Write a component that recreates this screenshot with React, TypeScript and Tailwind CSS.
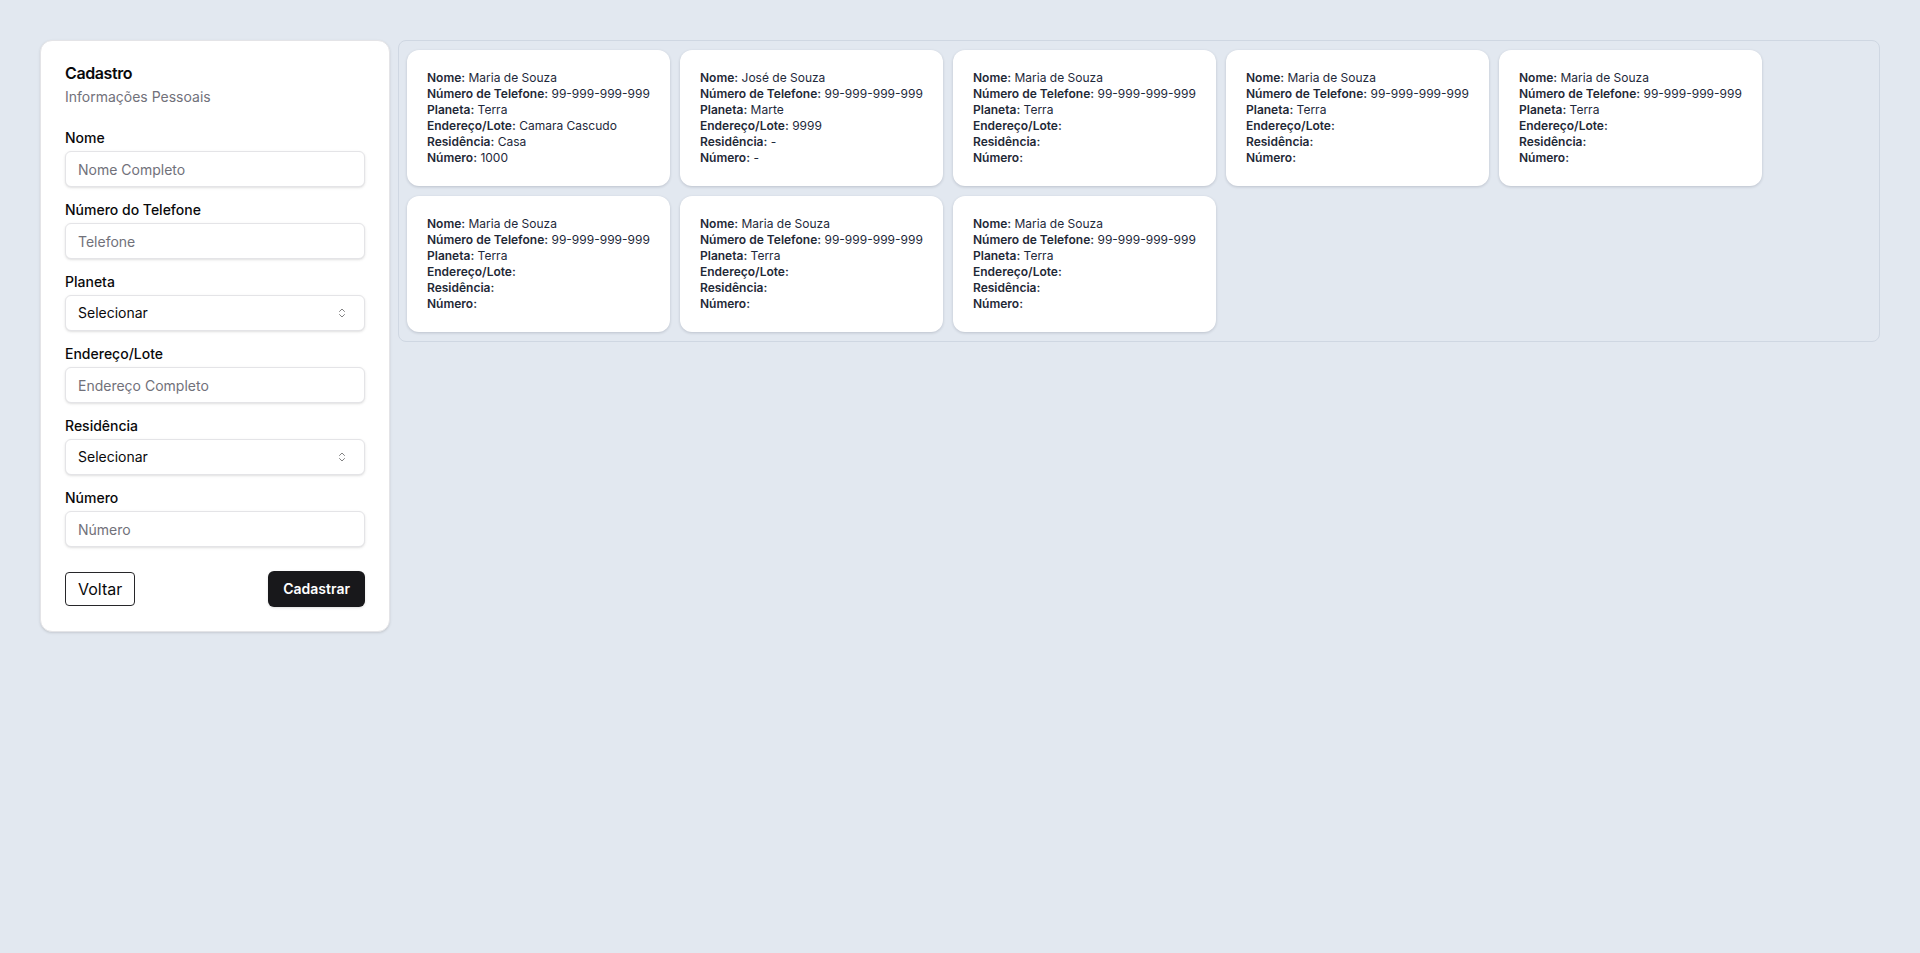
import type { ReactNode } from "react";

type Pessoa = {
  nome: string;
  telefone: string;
  planeta: string;
  endereco: string;
  residencia: string;
  numero: string;
};

const pessoas: Pessoa[] = [
  { nome: "Maria de Souza", telefone: "99-999-999-999", planeta: "Terra", endereco: "Camara Cascudo", residencia: "Casa", numero: "1000" },
  { nome: "José de Souza", telefone: "99-999-999-999", planeta: "Marte", endereco: "9999", residencia: "-", numero: "-" },
  { nome: "Maria de Souza", telefone: "99-999-999-999", planeta: "Terra", endereco: "", residencia: "", numero: "" },
  { nome: "Maria de Souza", telefone: "99-999-999-999", planeta: "Terra", endereco: "", residencia: "", numero: "" },
  { nome: "Maria de Souza", telefone: "99-999-999-999", planeta: "Terra", endereco: "", residencia: "", numero: "" },
  { nome: "Maria de Souza", telefone: "99-999-999-999", planeta: "Terra", endereco: "", residencia: "", numero: "" },
  { nome: "Maria de Souza", telefone: "99-999-999-999", planeta: "Terra", endereco: "", residencia: "", numero: "" },
  { nome: "Maria de Souza", telefone: "99-999-999-999", planeta: "Terra", endereco: "", residencia: "", numero: "" },
];

function Field({ label, children }: { label: string; children: ReactNode }) {
  return (
    <div className="flex flex-col gap-1.5">
      <label className="text-sm leading-none font-medium text-[#09090b]">{label}</label>
      {children}
    </div>
  );
}

function TextInput({ placeholder }: { placeholder: string }) {
  return (
    <input
      placeholder={placeholder}
      className="h-9 w-full rounded-md border border-[#e4e4e7] bg-white px-3 text-sm text-[#09090b] shadow-sm outline-none placeholder:text-[#71717a]"
    />
  );
}

function SelectBox() {
  return (
    <button
      type="button"
      className="flex h-9 w-full items-center justify-between rounded-md border border-[#e4e4e7] bg-white px-3 text-sm text-[#09090b] shadow-sm"
    >
      <span>Selecionar</span>
      <svg
        viewBox="0 0 24 24"
        className="mr-1 h-3 w-3 text-[#09090b] opacity-50"
        fill="none"
        stroke="currentColor"
        strokeWidth={2}
        strokeLinecap="round"
        strokeLinejoin="round"
      >
        <path d="m7 15 5 5 5-5" />
        <path d="m7 9 5-5 5 5" />
      </svg>
    </button>
  );
}

function PessoaCard({ p }: { p: Pessoa }) {
  const rows: [string, string][] = [
    ["Nome:", p.nome],
    ["Número de Telefone:", p.telefone],
    ["Planeta:", p.planeta],
    ["Endereço/Lote:", p.endereco],
    ["Residência:", p.residencia],
    ["Número:", p.numero],
  ];
  return (
    <div className="w-[263px] rounded-xl bg-white px-5 py-5 shadow-[0_1px_3px_rgba(15,23,42,0.18)]">
      {rows.map(([k, v]) => (
        <p key={k} className="text-xs leading-4 text-[#1e293b]">
          <span className="font-semibold text-[#1f2937]">{k}</span> {v}
        </p>
      ))}
    </div>
  );
}

export default function App() {
  return (
    <main
      className="flex min-h-screen w-full items-start gap-2 bg-[#e2e8f0] p-10"
      style={{ fontFamily: "Inter, 'Noto Sans', sans-serif" }}
    >
      <section className="w-[350px] shrink-0 rounded-xl border border-[#e4e4e7] bg-white text-[#09090b] shadow-sm">
        <div className="flex flex-col gap-1.5 p-6">
          <h2 className="leading-none font-semibold tracking-tight">Cadastro</h2>
          <p className="text-sm text-[#71717a]">Informações Pessoais</p>
        </div>
        <div className="flex flex-col gap-4 px-6 pb-6">
          <Field label="Nome">
            <TextInput placeholder="Nome Completo" />
          </Field>
          <Field label="Número do Telefone">
            <TextInput placeholder="Telefone" />
          </Field>
          <Field label="Planeta">
            <SelectBox />
          </Field>
          <Field label="Endereço/Lote">
            <TextInput placeholder="Endereço Completo" />
          </Field>
          <Field label="Residência">
            <SelectBox />
          </Field>
          <Field label="Número">
            <TextInput placeholder="Número" />
          </Field>
        </div>
        <div className="flex items-center justify-between px-6 pb-6">
          <button type="button" className="rounded-[4px] border border-[#27272a] px-3 py-1 text-base text-[#09090b]">
            Voltar
          </button>
          <button type="button" className="h-9 rounded-md bg-[#18181b] px-[15px] text-sm font-semibold text-white shadow">
            Cadastrar
          </button>
        </div>
      </section>

      <section className="flex flex-1 flex-wrap content-start gap-2.5 rounded-lg border border-[#cfd7e2] px-2 py-[9px]">
        {pessoas.map((p, i) => (
          <PessoaCard key={i} p={p} />
        ))}
      </section>
    </main>
  );
}
